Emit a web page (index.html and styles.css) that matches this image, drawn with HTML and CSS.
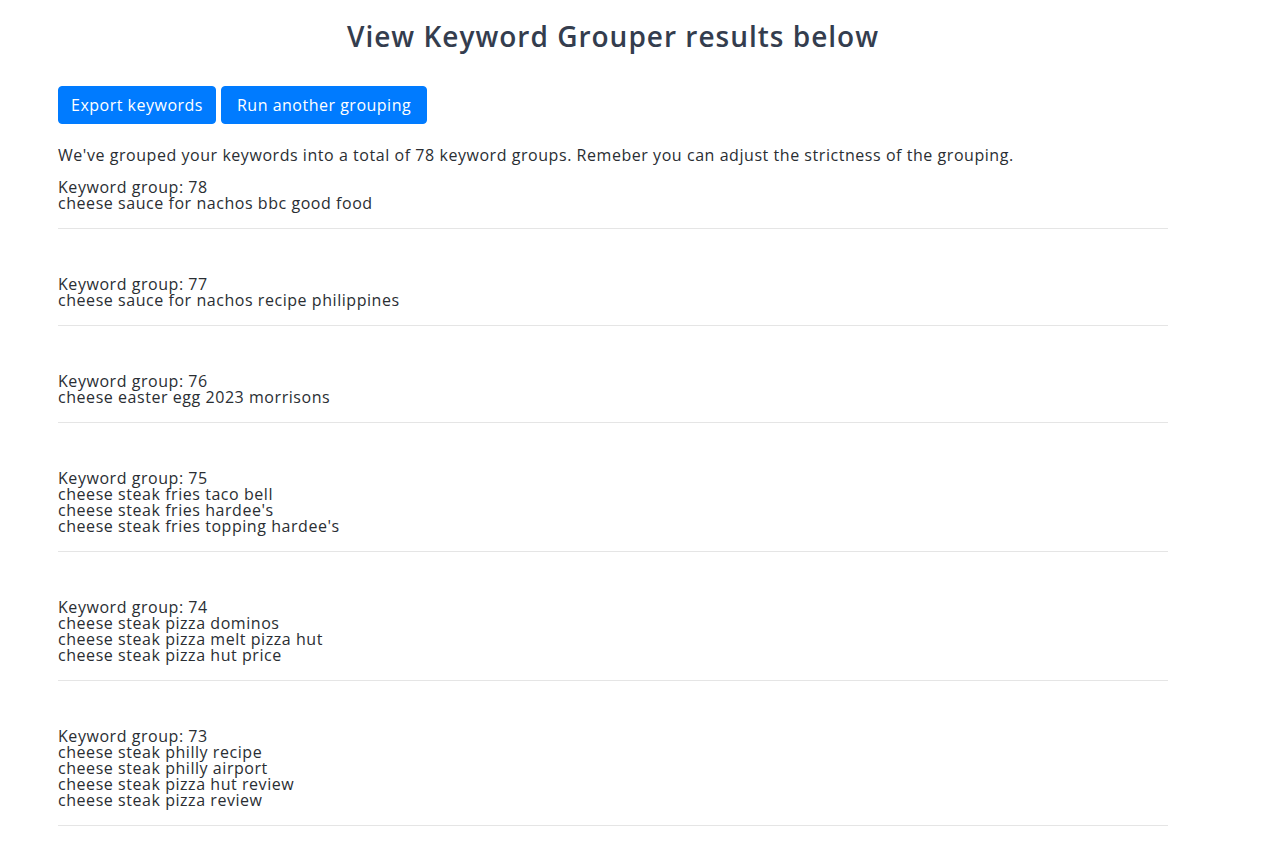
FILE: index.html
```html
<!DOCTYPE html>
<html>
<head>
<meta charset="utf-8">
<link rel="stylesheet" href="styles.css">
</head>
<body>
<div class="page">
  <h1 class="title">View Keyword Grouper results below</h1>
  <div class="actions">
    <button class="btn">Export keywords</button>
    <button class="btn btn-wide">Run another grouping</button>
  </div>
  <p class="intro">We've grouped your keywords into a total of 78 keyword groups. Remeber you can adjust the strictness of the grouping.</p>
  <div class="group">
    <div class="line">Keyword group: 78</div>
    <div class="line">cheese sauce for nachos bbc good food</div>
  </div>
  <div class="group">
    <div class="line">Keyword group: 77</div>
    <div class="line">cheese sauce for nachos recipe philippines</div>
  </div>
  <div class="group">
    <div class="line">Keyword group: 76</div>
    <div class="line">cheese easter egg 2023 morrisons</div>
  </div>
  <div class="group">
    <div class="line">Keyword group: 75</div>
    <div class="line">cheese steak fries taco bell</div>
    <div class="line">cheese steak fries hardee's</div>
    <div class="line">cheese steak fries topping hardee's</div>
  </div>
  <div class="group">
    <div class="line">Keyword group: 74</div>
    <div class="line">cheese steak pizza dominos</div>
    <div class="line">cheese steak pizza melt pizza hut</div>
    <div class="line">cheese steak pizza hut price</div>
  </div>
  <div class="group">
    <div class="line">Keyword group: 73</div>
    <div class="line">cheese steak philly recipe</div>
    <div class="line">cheese steak philly airport</div>
    <div class="line">cheese steak pizza hut review</div>
    <div class="line">cheese steak pizza review</div>
  </div>
</div>
</body>
</html>
```
FILE: styles.css
```css
html, body {
  margin: 0;
  padding: 0;
  background: #ffffff;
}
body {
  font-family: "Open Sans", "Liberation Sans", sans-serif;
  color: #2a2e33;
  font-size: 16px;
  letter-spacing: 0.55px;
}
.page {
  width: 1110px;
  margin-left: 58px;
  padding-top: 17px;
}
.title {
  margin: 0;
  text-align: center;
  font-size: 28px;
  font-weight: 600;
  line-height: 38px;
  letter-spacing: 1px;
  color: #343d4e;
}
.actions {
  display: flex;
  gap: 5px;
  margin-top: 31px;
}
.btn {
  font-family: inherit;
  font-size: 16px;
  letter-spacing: 0.5px;
  color: #ffffff;
  background: #007bff;
  border: 1px solid #007bff;
  border-radius: 4px;
  height: 38px;
  padding: 0 12px;
  line-height: 36px;
}
.btn-wide {
  padding: 0 15px;
}
.intro {
  margin: 23px 0 0 0;
  line-height: 16px;
}
.group {
  padding-top: 16px;
  padding-bottom: 17px;
  border-bottom: 1px solid #e5e5e5;
}
.group + .group {
  padding-top: 47px;
}
.line {
  line-height: 16px;
}
```
